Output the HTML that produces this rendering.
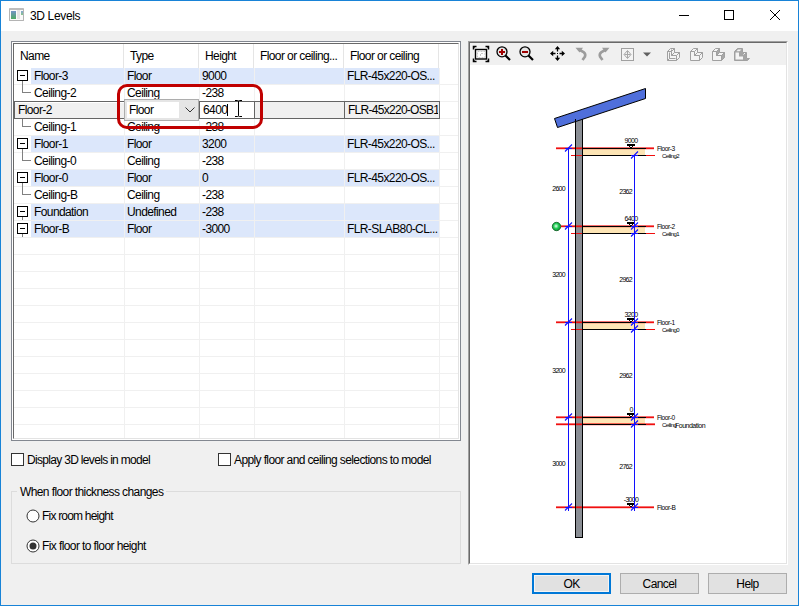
<!DOCTYPE html>
<html><head><meta charset="utf-8">
<style>
*{margin:0;padding:0;box-sizing:border-box}
html,body{width:799px;height:606px;overflow:hidden;background:#F0F0F0}
body{font-family:"Liberation Sans",sans-serif;font-size:12px;letter-spacing:-0.6px;color:#000;position:relative}
.a{position:absolute}
.t{position:absolute;white-space:nowrap;line-height:16px;height:16px}
#win{left:0;top:0;width:799px;height:606px;border:1px solid #1883D7;background:#F0F0F0}
#title{left:1px;top:1px;width:797px;height:30px;background:#fff}
.hl{background:#DDE7F9}
.gv{background:#F0F0F0}
.hv{background:#E5E5E5}
.btn{position:absolute;height:21px;width:79px;background:#E1E1E1;border:1px solid #ADADAD;text-align:center;line-height:19px;padding-top:1px}
</style></head><body>
<div id="win" class="a"></div>
<div id="title" class="a"></div>
<!-- title icon -->
<div class="a" style="left:9px;top:8px;width:15px;height:13px;border:1px solid #B4B4B4;border-top:2px solid #BDBDBD;background:#FAFAFA;border-radius:1px"></div>
<div class="a" style="left:11px;top:11px;width:5px;height:8px;background:linear-gradient(#7393C6,#4CAA62)"></div>
<div class="a" style="left:17px;top:10px;width:3px;height:9px;background:#E4E4E4"></div>
<div class="a" style="left:21px;top:11px;width:2px;height:4px;background:linear-gradient(#85A5D5,#86C488)"></div>
<div class="t" style="left:30px;top:8px;font-size:12px;letter-spacing:-0.35px;">3D Levels</div>
<!-- window controls -->
<div class="a" style="left:679px;top:15px;width:10px;height:1px;background:#000"></div>
<div class="a" style="left:724px;top:10px;width:10px;height:10px;border:1px solid #000"></div>
<svg class="a" style="left:769px;top:9px" width="12" height="12" viewBox="0 0 12 12"><path d="M1 1L11 11M11 1L1 11" stroke="#000" stroke-width="1" fill="none"/></svg>

<!-- list box -->
<div class="a" style="left:11px;top:41px;width:450px;height:400px;border:1px solid #828790"></div>
<div class="a" style="left:12px;top:42px;width:448px;height:398px;border-top:1px solid #fff;border-left:1px solid #fff;border-right:1px solid #fff;border-bottom:1px solid #fff"></div>
<div class="a" style="left:13px;top:43px;width:446px;height:396px;border-top:1px solid #696969;border-left:1px solid #696969;border-right:1px solid #E3E3E3;border-bottom:1px solid #E3E3E3;background:#fff"></div>
<div class="a" style="left:123px;top:44px;width:1px;height:24px;background:#E5E5E5"></div>
<div class="a" style="left:198px;top:44px;width:1px;height:24px;background:#E5E5E5"></div>
<div class="a" style="left:253px;top:44px;width:1px;height:24px;background:#E5E5E5"></div>
<div class="a" style="left:343px;top:44px;width:1px;height:24px;background:#E5E5E5"></div>
<div class="a" style="left:438px;top:44px;width:1px;height:24px;background:#E5E5E5"></div>
<div class="t" style="left:20px;top:48px;">Name</div>
<div class="t" style="left:130px;top:48px;">Type</div>
<div class="t" style="left:205px;top:48px;">Height</div>
<div class="t" style="left:260px;top:48px;">Floor or ceiling...</div>
<div class="t" style="left:350px;top:48px;">Floor or ceiling</div>
<div class="a" style="left:31px;top:68px;width:408px;height:16px;background:#DCE7FB"></div>
<div class="a" style="left:31px;top:136px;width:408px;height:16px;background:#DCE7FB"></div>
<div class="a" style="left:31px;top:170px;width:408px;height:16px;background:#DCE7FB"></div>
<div class="a" style="left:31px;top:204px;width:408px;height:16px;background:#DCE7FB"></div>
<div class="a" style="left:31px;top:221px;width:408px;height:16px;background:#DCE7FB"></div>
<div class="a" style="left:14px;top:84px;width:444px;height:1px;background:#F0F0F0"></div>
<div class="a" style="left:14px;top:101px;width:444px;height:1px;background:#F0F0F0"></div>
<div class="a" style="left:14px;top:118px;width:444px;height:1px;background:#F0F0F0"></div>
<div class="a" style="left:14px;top:135px;width:444px;height:1px;background:#F0F0F0"></div>
<div class="a" style="left:14px;top:152px;width:444px;height:1px;background:#F0F0F0"></div>
<div class="a" style="left:14px;top:169px;width:444px;height:1px;background:#F0F0F0"></div>
<div class="a" style="left:14px;top:186px;width:444px;height:1px;background:#F0F0F0"></div>
<div class="a" style="left:14px;top:203px;width:444px;height:1px;background:#F0F0F0"></div>
<div class="a" style="left:14px;top:220px;width:444px;height:1px;background:#F0F0F0"></div>
<div class="a" style="left:14px;top:237px;width:444px;height:1px;background:#F0F0F0"></div>
<div class="a" style="left:14px;top:254px;width:444px;height:1px;background:#F0F0F0"></div>
<div class="a" style="left:14px;top:271px;width:444px;height:1px;background:#F0F0F0"></div>
<div class="a" style="left:14px;top:288px;width:444px;height:1px;background:#F0F0F0"></div>
<div class="a" style="left:14px;top:305px;width:444px;height:1px;background:#F0F0F0"></div>
<div class="a" style="left:14px;top:322px;width:444px;height:1px;background:#F0F0F0"></div>
<div class="a" style="left:14px;top:339px;width:444px;height:1px;background:#F0F0F0"></div>
<div class="a" style="left:14px;top:356px;width:444px;height:1px;background:#F0F0F0"></div>
<div class="a" style="left:14px;top:373px;width:444px;height:1px;background:#F0F0F0"></div>
<div class="a" style="left:14px;top:390px;width:444px;height:1px;background:#F0F0F0"></div>
<div class="a" style="left:14px;top:407px;width:444px;height:1px;background:#F0F0F0"></div>
<div class="a" style="left:14px;top:424px;width:444px;height:1px;background:#F0F0F0"></div>
<div class="a" style="left:124px;top:68px;width:1px;height:370px;background:#F0F0F0"></div>
<div class="a" style="left:199px;top:68px;width:1px;height:370px;background:#F0F0F0"></div>
<div class="a" style="left:254px;top:68px;width:1px;height:370px;background:#F0F0F0"></div>
<div class="a" style="left:344px;top:68px;width:1px;height:370px;background:#F0F0F0"></div>
<div class="a" style="left:439px;top:68px;width:1px;height:370px;background:#F0F0F0"></div>
<div class="a" style="left:17px;top:70px;width:11px;height:11px;border:1px solid #000;background:#fff"></div>
<div class="a" style="left:20px;top:75px;width:5px;height:1px;background:#000"></div>
<div class="a" style="left:22px;top:81px;width:1px;height:12px;background:#808080"></div>
<div class="a" style="left:22px;top:92px;width:9px;height:1px;background:#808080"></div>
<div class="t" style="left:34px;top:68px;">Floor-3</div>
<div class="t" style="left:127px;top:68px;">Floor</div>
<div class="t" style="left:202px;top:68px;">9000</div>
<div class="t" style="left:347px;top:68px;">FLR-45x220-OS...</div>
<div class="t" style="left:34px;top:85px;">Ceiling-2</div>
<div class="t" style="left:127px;top:85px;">Ceiling</div>
<div class="t" style="left:202px;top:85px;">-238</div>
<div class="t" style="left:34px;top:119px;">Ceiling-1</div>
<div class="a" style="left:22px;top:119px;width:1px;height:8px;background:#808080"></div>
<div class="a" style="left:22px;top:126px;width:9px;height:1px;background:#808080"></div>
<div class="t" style="left:127px;top:119px;">Ceiling</div>
<div class="t" style="left:202px;top:119px;">-238</div>
<div class="a" style="left:17px;top:138px;width:11px;height:11px;border:1px solid #000;background:#fff"></div>
<div class="a" style="left:20px;top:143px;width:5px;height:1px;background:#000"></div>
<div class="a" style="left:22px;top:149px;width:1px;height:12px;background:#808080"></div>
<div class="a" style="left:22px;top:160px;width:9px;height:1px;background:#808080"></div>
<div class="t" style="left:34px;top:136px;">Floor-1</div>
<div class="t" style="left:127px;top:136px;">Floor</div>
<div class="t" style="left:202px;top:136px;">3200</div>
<div class="t" style="left:347px;top:136px;">FLR-45x220-OS...</div>
<div class="t" style="left:34px;top:153px;">Ceiling-0</div>
<div class="t" style="left:127px;top:153px;">Ceiling</div>
<div class="t" style="left:202px;top:153px;">-238</div>
<div class="a" style="left:17px;top:172px;width:11px;height:11px;border:1px solid #000;background:#fff"></div>
<div class="a" style="left:20px;top:177px;width:5px;height:1px;background:#000"></div>
<div class="a" style="left:22px;top:183px;width:1px;height:12px;background:#808080"></div>
<div class="a" style="left:22px;top:194px;width:9px;height:1px;background:#808080"></div>
<div class="t" style="left:34px;top:170px;">Floor-0</div>
<div class="t" style="left:127px;top:170px;">Floor</div>
<div class="t" style="left:202px;top:170px;">0</div>
<div class="t" style="left:347px;top:170px;">FLR-45x220-OS...</div>
<div class="t" style="left:34px;top:187px;">Ceiling-B</div>
<div class="t" style="left:127px;top:187px;">Ceiling</div>
<div class="t" style="left:202px;top:187px;">-238</div>
<div class="a" style="left:17px;top:206px;width:11px;height:11px;border:1px solid #000;background:#fff"></div>
<div class="a" style="left:20px;top:211px;width:5px;height:1px;background:#000"></div>
<div class="a" style="left:22px;top:217px;width:1px;height:3px;background:#808080"></div>
<div class="t" style="left:34px;top:204px;">Foundation</div>
<div class="t" style="left:127px;top:204px;">Undefined</div>
<div class="t" style="left:202px;top:204px;">-238</div>
<div class="a" style="left:17px;top:223px;width:11px;height:11px;border:1px solid #000;background:#fff"></div>
<div class="a" style="left:20px;top:228px;width:5px;height:1px;background:#000"></div>
<div class="a" style="left:22px;top:234px;width:1px;height:3px;background:#808080"></div>
<div class="t" style="left:34px;top:221px;">Floor-B</div>
<div class="t" style="left:127px;top:221px;">Floor</div>
<div class="t" style="left:202px;top:221px;">-3000</div>
<div class="t" style="left:347px;top:221px;">FLR-SLAB80-CL...</div>
<div class="a" style="left:14px;top:101px;width:110px;height:18px;border:1px solid #646464;border-right:none;background:#F0F0F0"></div>
<div class="a" style="left:15px;top:102px;width:109px;height:1px;background:#fff"></div>
<div class="t" style="left:18px;top:102px;">Floor-2</div>
<div class="a" style="left:124px;top:99px;width:75px;height:22px;border:1px solid #ADADAD;background:#E5E5E5"></div>
<div class="a" style="left:127px;top:102px;width:52px;height:16px;background:#fff"></div>
<div class="t" style="left:129px;top:102px;">Floor</div>
<svg class="a" style="left:185px;top:107px" width="10" height="6"><path d="M0.5 0.5L5 5L9.5 0.5" stroke="#333" fill="none" stroke-width="1"/></svg>
<div class="a" style="left:199px;top:101px;width:56px;height:18px;border:1px solid #646464;background:#fff"></div>
<div class="t" style="left:203px;top:102px;">6400</div>
<div class="a" style="left:227px;top:104px;width:1px;height:12px;background:#000"></div>
<svg class="a" style="left:233px;top:100px" width="11" height="17"><path d="M2 0.5H4.5Q5.5 0.5 5.5 1.5V15.5Q5.5 16.5 4.5 16.5H2M9 0.5H6.5Q5.5 0.5 5.5 1.5M5.5 15.5Q5.5 16.5 6.5 16.5H9" stroke="#000" fill="none" stroke-width="1"/></svg>
<div class="a" style="left:254px;top:101px;width:91px;height:18px;border:1px solid #646464;background:#F0F0F0"></div>
<div class="a" style="left:344px;top:101px;width:96px;height:18px;border:1px solid #646464;background:#F0F0F0"><div class="a" style="left:0;top:0;width:93px;height:16px;overflow:hidden"><div class="t" style="left:3px;top:0px;letter-spacing:-0.72px">FLR-45x220-OSB18</div></div></div>
<div class="a" style="left:117px;top:84px;width:146px;height:45px;border:3px solid #C00000;border-radius:10px"></div>

<!-- checkboxes -->
<div class="a" style="left:11px;top:453px;width:13px;height:13px;border:1px solid #333;background:#fff"></div>
<div class="t" style="left:27px;top:452px;letter-spacing:-0.68px">Display 3D levels in model</div>
<div class="a" style="left:218px;top:453px;width:13px;height:13px;border:1px solid #333;background:#fff"></div>
<div class="t" style="left:234px;top:452px;letter-spacing:-0.62px">Apply floor and ceiling selections to model</div>

<!-- group box -->
<div class="a" style="left:11px;top:491px;width:450px;height:73px;border:1px solid #DCDCDC"></div>
<div class="t gv" style="left:17px;top:484px;padding:0 3px">When floor thickness changes</div>
<svg class="a" style="left:25.5px;top:508.5px" width="14" height="14"><circle cx="7" cy="7" r="6" fill="#fff" stroke="#333" stroke-width="1"/></svg>
<div class="t" style="left:42px;top:508px;letter-spacing:-0.8px">Fix room height</div>
<svg class="a" style="left:25.5px;top:539px" width="14" height="14"><circle cx="7" cy="7" r="6" fill="#fff" stroke="#333" stroke-width="1"/><circle cx="7" cy="7" r="3.5" fill="#333"/></svg>
<div class="t" style="left:42px;top:538px">Fix floor to floor height</div>

<!-- preview panel -->
<div class="a" style="left:468px;top:41px;width:320px;height:524px;border-top:1px solid #A0A0A0;border-left:1px solid #A0A0A0;border-right:1px solid #fff;border-bottom:1px solid #fff"></div>
<div class="a" style="left:469px;top:42px;width:318px;height:522px;border-top:1px solid #696969;border-left:1px solid #696969;border-right:1px solid #E3E3E3;border-bottom:1px solid #E3E3E3;background:#fff"></div>
<div class="a" style="left:470px;top:43px;width:316px;height:22px;background:#F0F0F0"></div>
<svg class="a" style="left:470px;top:43px" width="316" height="22" viewBox="470 43 316 22">
<path d="M473.5 49.5V46.5H476.5M485.5 46.5H488.5V49.5M488.5 58.5V61.5H485.5M476.5 61.5H473.5V58.5" stroke="#000" stroke-width="1.5" fill="none"/><path d="M473 46L476 46L473 49Z M489 46L486 46L489 49Z M489 62L486 62L489 59Z M473 62L476 62L473 59Z" fill="#000"/>
<rect x="475.5" y="49.5" width="11" height="9.5" fill="#fff" stroke="#000" stroke-width="1.4"/>
<path d="M477.5 51.5H485V57.5H477.5Z M480.5 56V53.5H484" stroke="#C8C8C8" stroke-width="1" fill="none" stroke-dasharray="2 1"/>
<line x1="505.5" y1="55.5" x2="510" y2="60" stroke="#000" stroke-width="2.2"/>
<circle cx="502" cy="51.8" r="5" fill="#E6E6E6" stroke="#000" stroke-width="1.3"/>
<rect x="499" y="51" width="6" height="2" fill="#A00000"/>
<rect x="501" y="49" width="2" height="6" fill="#A00000"/>
<line x1="528.5" y1="55.5" x2="533" y2="60" stroke="#000" stroke-width="2.2"/>
<circle cx="525" cy="51.8" r="5" fill="#E6E6E6" stroke="#000" stroke-width="1.3"/>
<rect x="522" y="51" width="6" height="2" fill="#A00000"/>
<path d="M557.5 46L554.8 49.2H560.2Z M557.5 61L554.8 57.8H560.2Z M550 53.5L553.2 50.8V56.2Z M565 53.5L561.8 50.8V56.2Z" fill="#000"/>
<path d="M557.5 49V51.5M557.5 55.5V58M553 53.5H555.5M559.5 53.5H562" stroke="#000" stroke-width="1.3"/>
<rect x="557" y="53" width="1" height="1" fill="#000"/>
<path d="M579 49.5L583.5 52Q586 54 585 56.5L582.5 60" stroke="#9C9C9C" stroke-width="2.6" fill="none"/><path d="M575.5 47.8H583L579.5 52.5Z" fill="#9C9C9C"/>
<path d="M606 49.5L601.5 52Q599 54 600 56.5L602.5 60" stroke="#9C9C9C" stroke-width="2.6" fill="none"/><path d="M609.5 47.8H602L605.5 52.5Z" fill="#9C9C9C"/>
<rect x="621.5" y="48.5" width="12" height="12" fill="#F4F4F4" stroke="#A0A0A0" stroke-width="1"/>
<path d="M627.5 50.5L631 54.5L627.5 58.5L624 54.5Z M627.5 51V58M624.5 54.5H630.5" stroke="#A8A8A8" stroke-width="1" fill="none"/>
<path d="M643 52.5H651L647 56.5Z" fill="#606060"/>
<path transform="translate(667,48)" d="M0.5 3.5H4.5V7.5H9.5V12.5H0.5Z" fill="#F4F4F4" stroke="#A0A0A0" stroke-width="1" stroke-linejoin="miter"/><path transform="translate(667,48)" d="M0.5 3.5L3.5 0.5H7.5L4.5 3.5Z" fill="#F4F4F4" stroke="#A0A0A0" stroke-width="1" stroke-linejoin="miter"/><path transform="translate(667,48)" d="M4.5 3.5L7.5 0.5V4.5L4.5 7.5Z" fill="#F4F4F4" stroke="#A0A0A0" stroke-width="1" stroke-linejoin="miter"/><path transform="translate(667,48)" d="M4.5 7.5L7.5 4.5H12.5L9.5 7.5Z" fill="#F4F4F4" stroke="#A0A0A0" stroke-width="1" stroke-linejoin="miter"/><path transform="translate(667,48)" d="M9.5 7.5L12.5 4.5V9.5L9.5 12.5Z" fill="#F4F4F4" stroke="#A0A0A0" stroke-width="1" stroke-linejoin="miter"/><path transform="translate(667,48)" d="M2.5 4.5V10.5H8.5M2.5 10.5L0.5 12.5M4.5 3.5V1.5" fill="none" stroke="#A0A0A0" stroke-width="1"/>
<path transform="translate(690,48)" d="M0.5 3.5H4.5V7.5H9.5V12.5H0.5Z" fill="#F4F4F4" stroke="#A0A0A0" stroke-width="1" stroke-linejoin="miter"/><path transform="translate(690,48)" d="M0.5 3.5L3.5 0.5H7.5L4.5 3.5Z" fill="#F4F4F4" stroke="#A0A0A0" stroke-width="1" stroke-linejoin="miter"/><path transform="translate(690,48)" d="M4.5 3.5L7.5 0.5V4.5L4.5 7.5Z" fill="#F4F4F4" stroke="#A0A0A0" stroke-width="1" stroke-linejoin="miter"/><path transform="translate(690,48)" d="M4.5 7.5L7.5 4.5H12.5L9.5 7.5Z" fill="#F4F4F4" stroke="#A0A0A0" stroke-width="1" stroke-linejoin="miter"/><path transform="translate(690,48)" d="M9.5 7.5L12.5 4.5V9.5L9.5 12.5Z" fill="#F4F4F4" stroke="#A0A0A0" stroke-width="1" stroke-linejoin="miter"/>
<path transform="translate(712,48)" d="M0.5 3.5H4.5V7.5H9.5V12.5H0.5Z" fill="#F4F4F4" stroke="#A0A0A0" stroke-width="1" stroke-linejoin="miter"/><path transform="translate(712,48)" d="M0.5 3.5L3.5 0.5H7.5L4.5 3.5Z" fill="#F4F4F4" stroke="#A0A0A0" stroke-width="1" stroke-linejoin="miter"/><path transform="translate(712,48)" d="M4.5 3.5L7.5 0.5V4.5L4.5 7.5Z" fill="#A8A8A8" stroke="#A0A0A0" stroke-width="1" stroke-linejoin="miter"/><path transform="translate(712,48)" d="M4.5 7.5L7.5 4.5H12.5L9.5 7.5Z" fill="#F4F4F4" stroke="#A0A0A0" stroke-width="1" stroke-linejoin="miter"/><path transform="translate(712,48)" d="M9.5 7.5L12.5 4.5V9.5L9.5 12.5Z" fill="#A8A8A8" stroke="#A0A0A0" stroke-width="1" stroke-linejoin="miter"/>
<path transform="translate(734,48)" d="M0.5 3.5L3.5 0.5H8.5V4.5H12.5V10.5H15.5L13.5 12.5H0.5Z" fill="#A4A4A4" stroke="#A0A0A0" stroke-width="1" stroke-linejoin="miter"/><path transform="translate(734,48)" d="M1.5 4.5H5V8.5H9V11.5H1.5Z" fill="#F4F4F4"/><path transform="translate(734,48)" d="M2.5 3.2L4 1.5H7.5L5.5 3.2Z" fill="#F4F4F4"/><path transform="translate(734,48)" d="M9.5 6.5L11 5" stroke="#F4F4F4" stroke-width="1"/>
</svg>
<svg class="a" style="left:470px;top:65px" width="316" height="498" viewBox="470 65 316 498" shape-rendering="crispEdges">
<defs><radialGradient id="gd" cx="0.45" cy="0.45" r="0.6"><stop offset="0" stop-color="#E8FFF0"/><stop offset="0.5" stop-color="#22CC55"/><stop offset="1" stop-color="#0A8A30"/></radialGradient></defs>
<rect x="575" y="119" width="8" height="419" fill="#8A8E94"/>
<polygon points="554.5,118.5 557.5,127.5 645.5,98.5 645.5,88.5" fill="#4F6FDB" stroke="#000" stroke-width="1" shape-rendering="auto"/>
<rect x="583" y="148" width="62" height="7" fill="#FDE5B5"/>
<rect x="556" y="147.4" width="98" height="1.8" fill="#F01010" shape-rendering="auto"/>
<rect x="583" y="148" width="63" height="1" fill="#000"/>
<rect x="571" y="155" width="84" height="1" fill="#F01010" shape-rendering="auto"/>
<rect x="583" y="155" width="63" height="1" fill="#000"/>
<path d="M628 145H634L631 148Z" fill="#fff" stroke="#000" stroke-width="1" shape-rendering="auto"/><rect x="627" y="144" width="8" height="1.5" fill="#000"/>
<text x="631" y="143" font-size="7" letter-spacing="-0.7" text-anchor="middle" font-family="Liberation Sans">9000</text>
<text x="657" y="151.2" font-size="6.6" letter-spacing="-0.45" font-family="Liberation Sans">Floor-3</text>
<text x="662" y="157.5" font-size="6" letter-spacing="-0.6" font-family="Liberation Sans">Ceiling2</text>
<rect x="583" y="226" width="62" height="7" fill="#FDE5B5"/>
<rect x="561" y="225.4" width="93" height="1.8" fill="#F01010" shape-rendering="auto"/>
<rect x="583" y="226" width="63" height="1" fill="#000"/>
<rect x="571" y="233" width="84" height="1" fill="#F01010" shape-rendering="auto"/>
<rect x="583" y="233" width="63" height="1" fill="#000"/>
<path d="M628 223H634L631 226Z" fill="#fff" stroke="#000" stroke-width="1" shape-rendering="auto"/><rect x="627" y="222" width="8" height="1.5" fill="#000"/>
<text x="631" y="221" font-size="7" letter-spacing="-0.7" text-anchor="middle" font-family="Liberation Sans">6400</text>
<text x="657" y="229.2" font-size="6.6" letter-spacing="-0.45" font-family="Liberation Sans">Floor-2</text>
<text x="662" y="235.5" font-size="6" letter-spacing="-0.6" font-family="Liberation Sans">Ceiling1</text>
<rect x="583" y="322" width="62" height="7" fill="#FDE5B5"/>
<rect x="556" y="321.4" width="98" height="1.8" fill="#F01010" shape-rendering="auto"/>
<rect x="583" y="322" width="63" height="1" fill="#000"/>
<rect x="571" y="329" width="84" height="1" fill="#F01010" shape-rendering="auto"/>
<rect x="583" y="329" width="63" height="1" fill="#000"/>
<path d="M628 319H634L631 322Z" fill="#fff" stroke="#000" stroke-width="1" shape-rendering="auto"/><rect x="627" y="318" width="8" height="1.5" fill="#000"/>
<text x="631" y="317" font-size="7" letter-spacing="-0.7" text-anchor="middle" font-family="Liberation Sans">3200</text>
<text x="657" y="325.2" font-size="6.6" letter-spacing="-0.45" font-family="Liberation Sans">Floor-1</text>
<text x="662" y="331.5" font-size="6" letter-spacing="-0.6" font-family="Liberation Sans">Ceiling0</text>
<rect x="583" y="417" width="62" height="7" fill="#FDE5B5"/>
<rect x="556" y="416.4" width="98" height="1.8" fill="#F01010" shape-rendering="auto"/>
<rect x="583" y="417" width="63" height="1" fill="#000"/>
<rect x="556" y="423.4" width="99" height="1.8" fill="#F01010" shape-rendering="auto"/>
<rect x="583" y="424" width="63" height="1" fill="#000"/>
<path d="M628 414H634L631 417Z" fill="#fff" stroke="#000" stroke-width="1" shape-rendering="auto"/><rect x="627" y="413" width="8" height="1.5" fill="#000"/>
<text x="631" y="412" font-size="7" letter-spacing="-0.7" text-anchor="middle" font-family="Liberation Sans">0</text>
<text x="657" y="420.2" font-size="6.6" letter-spacing="-0.45" font-family="Liberation Sans">Floor-0</text>
<text x="662" y="426.5" font-size="6" letter-spacing="-0.6" font-family="Liberation Sans">Ceiling</text>
<rect x="556" y="506.4" width="98" height="1.8" fill="#F01010" shape-rendering="auto"/>
<path d="M628 504H634L631 507Z" fill="#fff" stroke="#000" stroke-width="1" shape-rendering="auto"/><rect x="627" y="503" width="8" height="1.5" fill="#000"/>
<text x="631" y="502" font-size="7" letter-spacing="-0.7" text-anchor="middle" font-family="Liberation Sans">-3000</text>
<text x="657" y="510.2" font-size="6.6" letter-spacing="-0.45" font-family="Liberation Sans">Floor-B</text>
<text x="675" y="428" font-size="7" letter-spacing="-0.5" font-family="Liberation Sans">Foundation</text>
<rect x="575" y="119" width="1" height="419" fill="#000"/><rect x="582" y="119" width="1" height="419" fill="#000"/><rect x="575" y="537" width="8" height="1" fill="#000"/>
<rect x="568" y="148" width="1" height="363" fill="#1010FF"/>
<rect x="634" y="155" width="1" height="356" fill="#1010FF"/>
<path d="M565.0 151.5L572.0 144.5M565.0 148.5H572.0" stroke="#1010FF" stroke-width="1.1" fill="none" shape-rendering="auto"/>
<path d="M631.0 158.5L638.0 151.5M631.0 155.5H638.0" stroke="#1010FF" stroke-width="1.1" fill="none" shape-rendering="auto"/>
<path d="M565.0 229.5L572.0 222.5M565.0 226.5H572.0" stroke="#1010FF" stroke-width="1.1" fill="none" shape-rendering="auto"/>
<path d="M631.0 236.5L638.0 229.5M631.0 233.5H638.0" stroke="#1010FF" stroke-width="1.1" fill="none" shape-rendering="auto"/>
<path d="M631.0 229.5L638.0 222.5M631.0 226.5H638.0" stroke="#1010FF" stroke-width="1.1" fill="none" shape-rendering="auto"/>
<path d="M565.0 325.5L572.0 318.5M565.0 322.5H572.0" stroke="#1010FF" stroke-width="1.1" fill="none" shape-rendering="auto"/>
<path d="M631.0 332.5L638.0 325.5M631.0 329.5H638.0" stroke="#1010FF" stroke-width="1.1" fill="none" shape-rendering="auto"/>
<path d="M631.0 325.5L638.0 318.5M631.0 322.5H638.0" stroke="#1010FF" stroke-width="1.1" fill="none" shape-rendering="auto"/>
<path d="M565.0 420.5L572.0 413.5M565.0 417.5H572.0" stroke="#1010FF" stroke-width="1.1" fill="none" shape-rendering="auto"/>
<path d="M631.0 427.5L638.0 420.5M631.0 424.5H638.0" stroke="#1010FF" stroke-width="1.1" fill="none" shape-rendering="auto"/>
<path d="M631.0 420.5L638.0 413.5M631.0 417.5H638.0" stroke="#1010FF" stroke-width="1.1" fill="none" shape-rendering="auto"/>
<path d="M565.0 510.5L572.0 503.5M565.0 507.5H572.0" stroke="#1010FF" stroke-width="1.1" fill="none" shape-rendering="auto"/>
<path d="M631.0 510.5L638.0 503.5M631.0 507.5H638.0" stroke="#1010FF" stroke-width="1.1" fill="none" shape-rendering="auto"/>
<text x="565" y="191" font-size="7" letter-spacing="-0.7" text-anchor="end" font-family="Liberation Sans">2600</text>
<text x="565" y="277" font-size="7" letter-spacing="-0.7" text-anchor="end" font-family="Liberation Sans">3200</text>
<text x="565" y="372.5" font-size="7" letter-spacing="-0.7" text-anchor="end" font-family="Liberation Sans">3200</text>
<text x="565" y="466" font-size="7" letter-spacing="-0.7" text-anchor="end" font-family="Liberation Sans">3000</text>
<text x="632" y="194" font-size="7" letter-spacing="-0.7" text-anchor="end" font-family="Liberation Sans">2362</text>
<text x="632" y="282" font-size="7" letter-spacing="-0.7" text-anchor="end" font-family="Liberation Sans">2962</text>
<text x="632" y="377.5" font-size="7" letter-spacing="-0.7" text-anchor="end" font-family="Liberation Sans">2962</text>
<text x="632" y="469" font-size="7" letter-spacing="-0.7" text-anchor="end" font-family="Liberation Sans">2762</text>
<circle cx="556.5" cy="226.5" r="4.2" fill="url(#gd)" stroke="#0A5A20" stroke-width="0.8" shape-rendering="auto"/>
</svg>

<!-- buttons -->
<div class="btn" style="left:532px;top:573px;border:2px solid #0078D7;line-height:17px;box-shadow:inset 0 0 0 1px #F4F4F4">OK</div>
<div class="btn" style="left:620px;top:573px">Cancel</div>
<div class="btn" style="left:708px;top:573px">Help</div>
</body></html>
